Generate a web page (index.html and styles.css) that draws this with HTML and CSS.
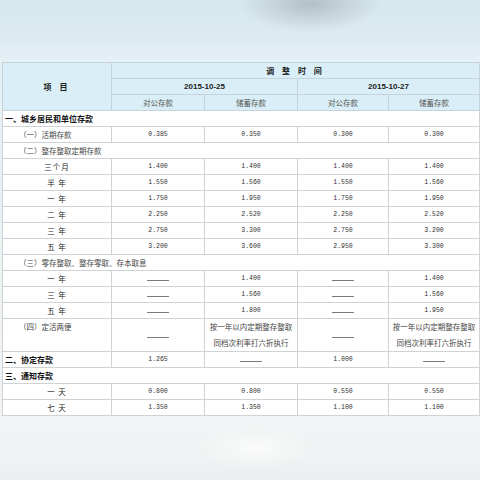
FILE: index.html
```html
<!DOCTYPE html>
<html lang="zh-CN">
<head>
<meta charset="utf-8">
<title>存款利率调整表</title>
<link rel="stylesheet" href="styles.css">
</head>
<body>
<div class="page">
  <table class="rates">
    <colgroup>
      <col class="c-item">
      <col class="c-val">
      <col class="c-val">
      <col class="c-val2">
      <col class="c-val2">
    </colgroup>
    <thead>
      <tr>
        <th rowspan="3" class="h-item">项 目</th>
        <th colspan="4" class="h-time">调 整 时 间</th>
      </tr>
      <tr>
        <th colspan="2" class="h-date">2015-10-25</th>
        <th colspan="2" class="h-date">2015-10-27</th>
      </tr>
      <tr>
        <th class="h-sub">对公存款</th>
        <th class="h-sub">储蓄存款</th>
        <th class="h-sub">对公存款</th>
        <th class="h-sub">储蓄存款</th>
      </tr>
    </thead>
    <tbody>
      <tr><td colspan="5" class="sec">一、城乡居民和单位存款</td></tr>
      <tr><td class="sub">（一）活期存款</td><td class="num">0.385</td><td class="num">0.350</td><td class="num">0.300</td><td class="num">0.300</td></tr>
      <tr><td colspan="5" class="sub">（二）整存整取定期存款</td></tr>
      <tr><td class="term">三个月</td><td class="num">1.400</td><td class="num">1.400</td><td class="num">1.400</td><td class="num">1.400</td></tr>
      <tr><td class="term">半 年</td><td class="num">1.550</td><td class="num">1.560</td><td class="num">1.550</td><td class="num">1.560</td></tr>
      <tr><td class="term">一 年</td><td class="num">1.750</td><td class="num">1.950</td><td class="num">1.750</td><td class="num">1.950</td></tr>
      <tr><td class="term">二 年</td><td class="num">2.250</td><td class="num">2.520</td><td class="num">2.250</td><td class="num">2.520</td></tr>
      <tr><td class="term">三 年</td><td class="num">2.750</td><td class="num">3.300</td><td class="num">2.750</td><td class="num">3.200</td></tr>
      <tr><td class="term">五 年</td><td class="num">3.200</td><td class="num">3.600</td><td class="num">2.950</td><td class="num">3.300</td></tr>
      <tr><td colspan="5" class="sub">（三）零存整取、整存零取、存本取息</td></tr>
      <tr><td class="term">一 年</td><td class="dash"><span></span></td><td class="num">1.400</td><td class="dash"><span></span></td><td class="num">1.400</td></tr>
      <tr><td class="term">三 年</td><td class="dash"><span></span></td><td class="num">1.560</td><td class="dash"><span></span></td><td class="num">1.560</td></tr>
      <tr><td class="term">五 年</td><td class="dash"><span></span></td><td class="num">1.800</td><td class="dash"><span></span></td><td class="num">1.950</td></tr>
      <tr class="tall"><td class="sub top">（四）定活两便</td><td class="dash"><span></span></td><td class="note">按一年以内定期整存整取<br>同档次利率打六折执行</td><td class="dash"><span></span></td><td class="note">按一年以内定期整存整取<br>同档次利率打六折执行</td></tr>
      <tr><td class="sec">二、协定存款</td><td class="num">1.265</td><td class="dash"><span></span></td><td class="num">1.000</td><td class="dash"><span></span></td></tr>
      <tr><td colspan="5" class="sec">三、通知存款</td></tr>
      <tr><td class="term">一 天</td><td class="num">0.800</td><td class="num">0.800</td><td class="num">0.550</td><td class="num">0.550</td></tr>
      <tr><td class="term">七 天</td><td class="num">1.350</td><td class="num">1.350</td><td class="num">1.100</td><td class="num">1.100</td></tr>
    </tbody>
  </table>
</div>
</body>
</html>
```

FILE: styles.css
```css
html, body {
  margin: 0;
  padding: 0;
}

body {
  width: 480px;
  height: 480px;
  overflow: hidden;
  font-family: "Noto Sans CJK SC", "Noto Sans", sans-serif;
  color: #333;
  background:
    radial-gradient(ellipse 70px 28px at 310px 4px, rgba(150, 160, 165, 0.55), rgba(150, 160, 165, 0) 100%),
    radial-gradient(ellipse 60px 22px at 255px 448px, rgba(255, 255, 255, 0.7), rgba(255, 255, 255, 0) 100%),
    linear-gradient(to bottom, #d6e7ee 0, #dcebf1 40px, #e6f0f4 62px, #f1f3f4 420px, #eff1f2 460px, #eaeff1 480px);
}

.page {
  padding: 62px 1px 0 2px;
}

.rates {
  width: 477px;
  table-layout: fixed;
  border-collapse: collapse;
  background: #fff;
  border: 1px solid #c6cdd0;
}

.c-item { width: 109px; }
.c-val { width: 93px; }
.c-val2 { width: 91px; }

.rates th,
.rates td {
  padding: 0;
  height: 15px;
  line-height: 15px;
  border: 1px solid #cfd3d5;
  text-align: center;
  white-space: nowrap;
  overflow: hidden;
}

.rates th {
  background: #d9eef6;
  border-color: #c4d4da;
  font-weight: normal;
  color: #333;
}

.h-item,
.h-time {
  font-weight: bold !important;
  font-size: 8px;
  letter-spacing: 3px;
  color: #222 !important;
}

.h-date {
  font-family: "Liberation Sans", Arial, sans-serif;
  font-weight: bold !important;
  font-size: 8px;
  color: #222 !important;
}

.h-sub {
  font-size: 7.5px;
  color: #555 !important;
}

.sec {
  text-align: left !important;
  padding-left: 2px !important;
  font-weight: bold;
  font-size: 8px;
  color: #111;
}

.sub {
  text-align: left !important;
  padding-left: 16px !important;
  font-size: 7.5px;
  color: #444;
}

.top {
  vertical-align: top;
}

.term {
  font-size: 7.5px;
  color: #222;
  letter-spacing: 1px;
}

.num {
  font-family: "Liberation Mono", "DejaVu Sans Mono", monospace;
  font-size: 6.5px;
  color: #333;
}

.dash span {
  display: inline-block;
  width: 22px;
  height: 1px;
  background: #7a7a7a;
  vertical-align: middle;
}

.tall td {
  height: 31px;
}

.note {
  font-size: 7.5px;
  line-height: 16px !important;
  color: #444;
  white-space: normal !important;
}
```
